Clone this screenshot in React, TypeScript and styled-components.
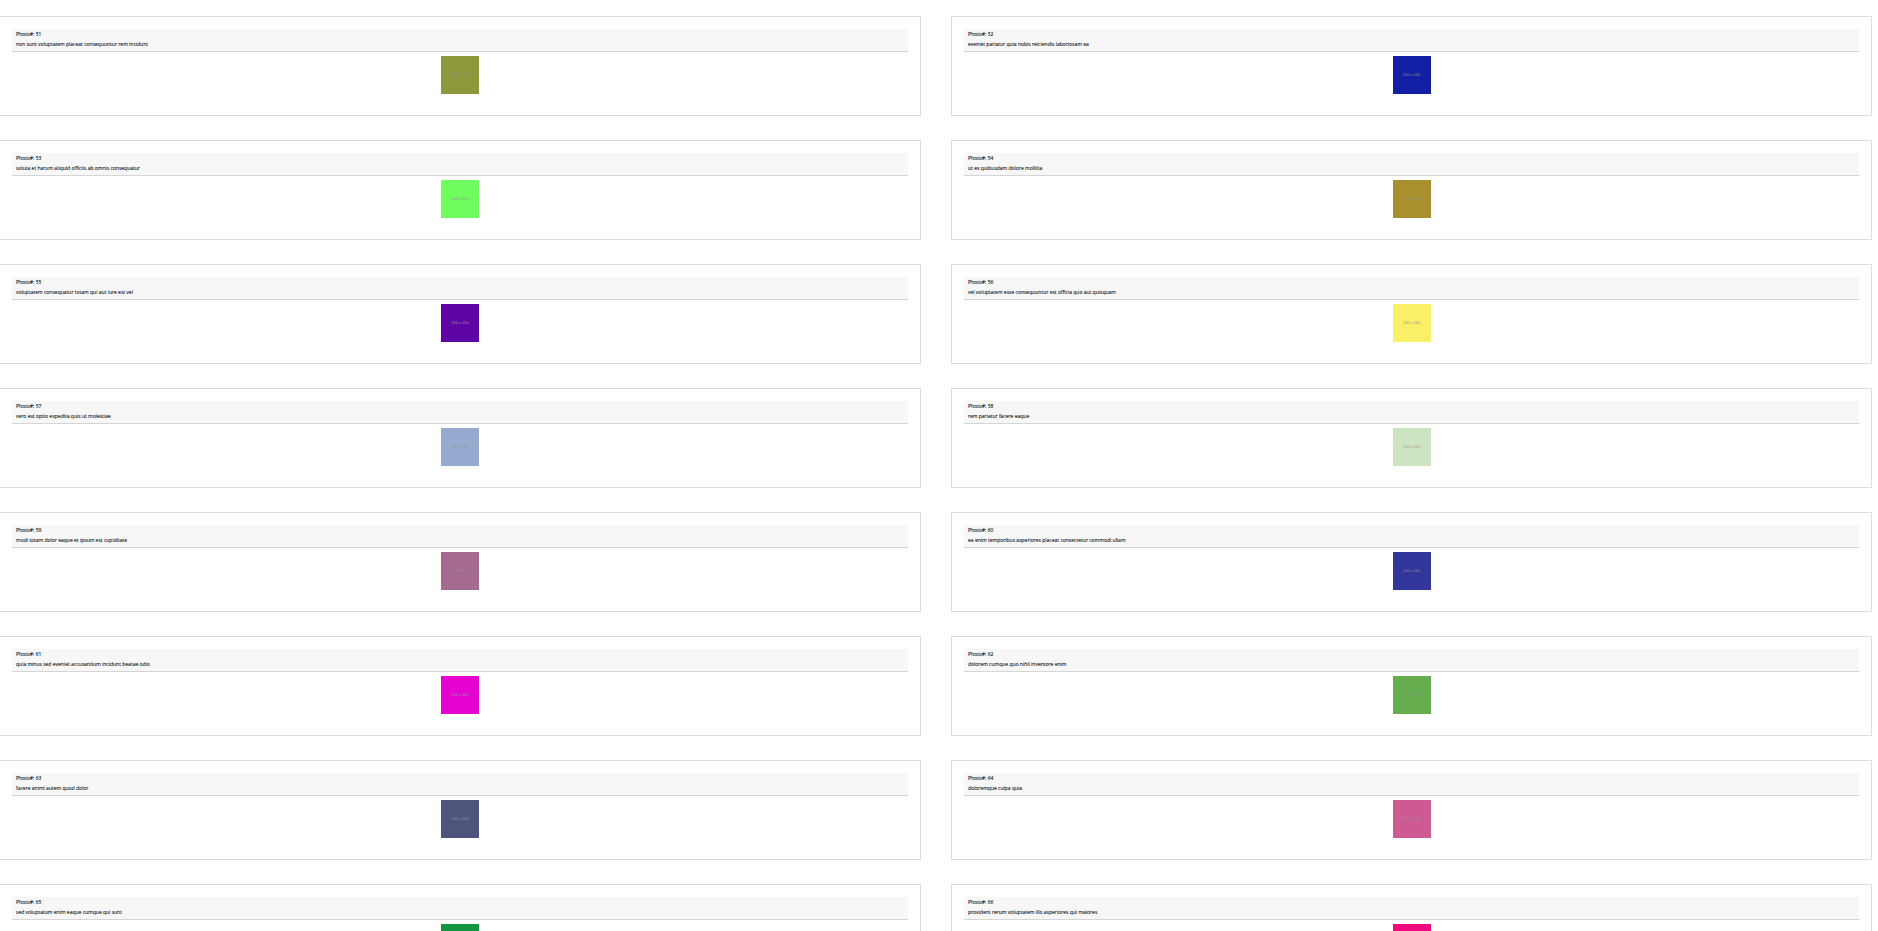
import React from 'react';
import styled, { createGlobalStyle } from 'styled-components';

type Photo = { id: number; title: string; color: string };

const photos: Photo[] = [
  { id: 51, title: 'non sunt voluptatem placeat consequuntur rem incidunt', color: '#8e973b' },
  { id: 52, title: 'eveniet pariatur quia nobis reiciendis laboriosam ea', color: '#121fa4' },
  { id: 53, title: 'soluta et harum aliquid officiis ab omnis consequatur', color: '#6efc5f' },
  { id: 54, title: 'ut ex quibusdam dolore mollitia', color: '#aa8f2e' },
  { id: 55, title: 'voluptatem consequatur totam qui aut iure est vel', color: '#5e04a4' },
  { id: 56, title: 'vel voluptatem esse consequuntur est officia quo aut quisquam', color: '#f9f067' },
  { id: 57, title: 'vero est optio expedita quis ut molestiae', color: '#95acd0' },
  { id: 58, title: 'rem pariatur facere eaque', color: '#cde4c1' },
  { id: 59, title: 'modi totam dolor eaque et ipsum est cupiditate', color: '#a46a91' },
  { id: 60, title: 'ea enim temporibus asperiores placeat consectetur commodi ullam', color: '#323599' },
  { id: 61, title: 'quia minus sed eveniet accusantium incidunt beatae odio', color: '#e403d1' },
  { id: 62, title: 'dolorem cumque quo nihil inventore enim', color: '#65ad4f' },
  { id: 63, title: 'facere animi autem quod dolor', color: '#4e557c' },
  { id: 64, title: 'doloremque culpa quia', color: '#cd5a92' },
  { id: 65, title: 'sed voluptatum enim eaque cumque qui sunt', color: '#149540' },
  { id: 66, title: 'provident rerum voluptatem illo asperiores qui maiores', color: '#ee0a7e' },
];

const GlobalStyle = createGlobalStyle`
  *, *::before, *::after { box-sizing: border-box; }

  body {
    margin: 0;
    background: #fff;
    color: #212529;
    font-family: 'Open Sans', 'Noto Sans', sans-serif;
  }
`;

const Gallery = styled.main`
  display: grid;
  grid-template-columns: repeat(2, minmax(0, 1fr));
  align-content: start;
  gap: 24px 30px;
  height: 100vh;
  padding: 16px 6px 0 0;
  overflow-y: auto;
  scrollbar-width: none;
`;

const Card = styled.article`
  min-height: 100px;
  padding: 12px;
  border: 1px solid #dedede;

  &:nth-child(odd) {
    border-left: 0;
  }
`;

const CardHeader = styled.header`
  padding: 0 4px 2px;
  border-bottom: 1px solid #d5d5d5;
  background: #f7f7f7;
`;

const CardLine = styled.h2`
  margin: 0;
  font-size: 5px;
  font-weight: 500;
  line-height: 10px;
  text-shadow: 0 0 0 #21252999;
`;

const Thumbnail = styled.figure<{ $color: string }>`
  display: flex;
  align-items: center;
  justify-content: center;
  width: 38px;
  height: 38px;
  margin: 4px auto 0;
  background: ${({ $color }) => $color};
  color: #969696;
  font-family: 'Liberation Sans Narrow', 'Liberation Sans', sans-serif;
  font-size: 4px;
  line-height: 4px;
  white-space: nowrap;
`;

export default function App() {
  return (
    <>
      <GlobalStyle />
      <Gallery>
        {photos.map(({ id, title, color }) => (
          <Card key={id}>
            <CardHeader>
              <CardLine>Photo#: {id}</CardLine>
              <CardLine as="p">{title}</CardLine>
            </CardHeader>
            <Thumbnail $color={color}>150 x 150</Thumbnail>
          </Card>
        ))}
      </Gallery>
    </>
  );
}
